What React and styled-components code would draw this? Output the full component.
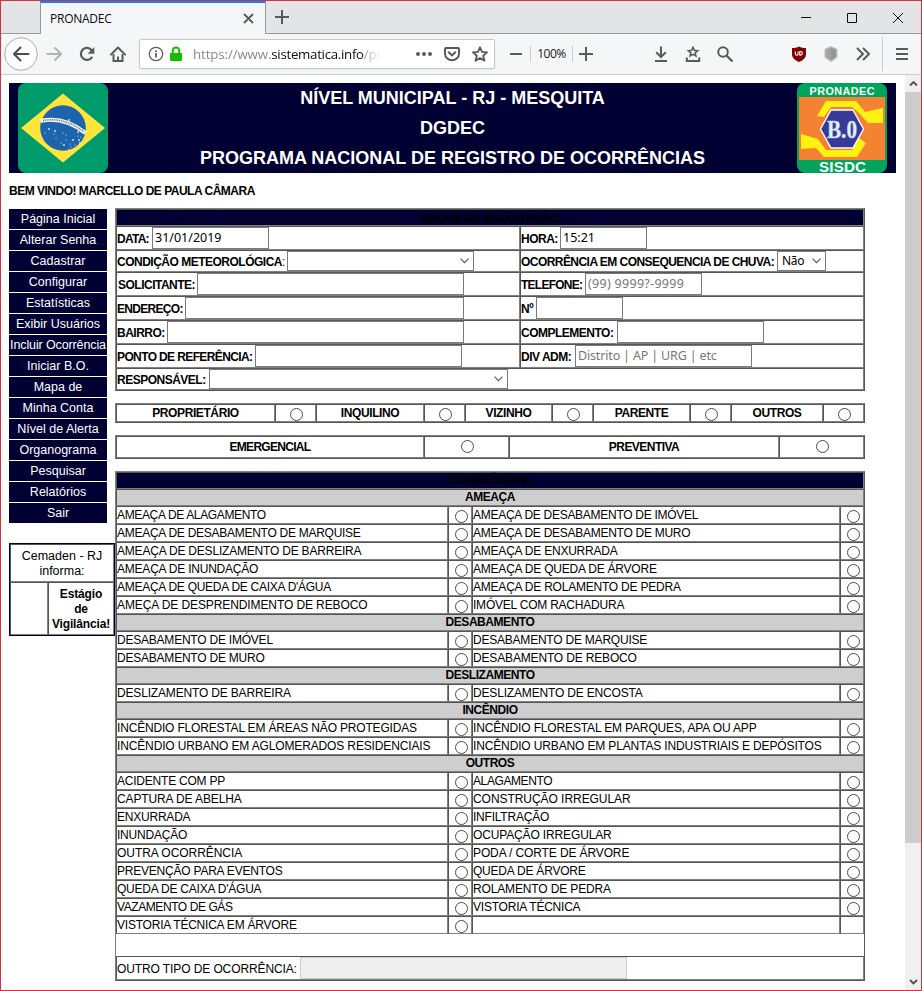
import React from 'react';
import styled, { createGlobalStyle } from 'styled-components';

const NAVY = '#000033';
const LIGHT = '#808080';
const DARK = '#555555';
const ARIAL = '"Liberation Sans", Arial, sans-serif';
const UI = '"Open Sans", "Noto Sans", sans-serif';

const GlobalStyle = createGlobalStyle`
  * { box-sizing: border-box; }
  body { margin: 0; background: #fff; }
  svg { display: block; flex: none; }
`;

/* ---------- browser chrome ---------- */

const Window = styled.div`
  width: 922px;
  height: 991px;
  border: 1px solid #d1343f;
  background: #fff;
  overflow: hidden;
  font-family: ${ARIAL};
  color: #000;
`;

const TabBar = styled.div`
  display: flex;
  height: 33px;
  background: #e3e4e6;
  border-bottom: 1px solid #98989b;
`;

const Tab = styled.div`
  display: flex;
  align-items: center;
  justify-content: space-between;
  width: 226px;
  height: 33px;
  margin-left: 39px;
  padding: 0 11px 0 9px;
  background: #f5f6f7;
  border: 1px solid #98989b;
  border-top: 2px solid #0a84ff;
  border-bottom: 0;
  font: 12px/30px ${UI};
  color: #0c0c0d;
`;

const TabTitle = styled.span`
  letter-spacing: -0.25px;
`;

const NewTab = styled.div`
  display: flex;
  align-items: center;
  justify-content: center;
  width: 32px;
`;

const WindowControls = styled.div`
  display: flex;
  margin-left: auto;
`;

const ControlButton = styled.div`
  display: flex;
  align-items: center;
  justify-content: center;
  width: 46px;
  height: 34px;
`;

const Toolbar = styled.div`
  display: flex;
  align-items: center;
  height: 41px;
  background: #f5f6f7;
  border-bottom: 1px solid #cccccc;
`;

const Slot = styled.div`
  display: flex;
  align-items: center;
  justify-content: center;
  flex: none;
  width: ${(p) => p.$w || 32}px;
  height: 40px;
  margin-left: ${(p) => p.$gap || 0}px;
`;

const Divider = styled.div`
  flex: none;
  width: 1px;
  height: ${(p) => p.$h || 16}px;
  margin-left: ${(p) => p.$gap || 0}px;
  background: #cdcdcf;
`;

const UrlBar = styled.div`
  display: flex;
  align-items: center;
  flex: none;
  width: 356px;
  height: 30px;
  margin-left: 5px;
  background: #fff;
  border: 1px solid #c8c8ca;
  border-radius: 2px;
  box-shadow: 0 1px 3px rgba(0, 0, 0, 0.06);
`;

const UrlText = styled.div`
  width: 192px;
  margin-left: 9px;
  white-space: nowrap;
  font: 13.3px/28px ${UI};
  letter-spacing: -0.12px;
  color: #8a8a8c;
  mask-image: linear-gradient(to right, #000 168px, transparent 188px);
`;

const UrlHost = styled.span`
  color: #0c0c0d;
  letter-spacing: -0.3px;
`;

const ZoomLevel = styled.div`
  width: 41px;
  text-align: center;
  font: 12px/40px ${UI};
  letter-spacing: -0.5px;
  color: #1a1a1c;
`;

const Page = styled.div`
  display: flex;
  height: 915px;
`;

const PageBody = styled.div`
  width: 904px;
  padding: 8px 8px 0 8px;
`;

const Scrollbar = styled.div`
  display: flex;
  flex-direction: column;
  width: 16px;
  background: #f0f0f0;
`;

const ScrollArrow = styled.div`
  display: flex;
  align-items: center;
  justify-content: center;
  height: 17px;
`;

const ScrollThumb = styled.div`
  height: 751px;
  margin-bottom: auto;
  background: #cdcdcd;
`;

/* ---------- page header ---------- */

const Banner = styled.header`
  display: flex;
  justify-content: space-between;
  width: 887px;
  height: 90px;
  padding: 0 9px;
  background: ${NAVY};
`;

const BannerTitle = styled.div`
  color: #fff;
  font: bold 18px/30px ${ARIAL};
  text-align: center;
  white-space: nowrap;
`;

const Welcome = styled.div`
  height: 35px;
  font: bold 12px/36px ${ARIAL};
  letter-spacing: -0.5px;
`;

const Columns = styled.div`
  display: flex;
  align-items: flex-start;
`;

/* ---------- sidebar ---------- */

const Sidebar = styled.nav`
  width: 106px;
  padding-top: 1px;
`;

const MenuItem = styled.div`
  width: 98px;
  height: 20px;
  margin-bottom: 1px;
  background: ${NAVY};
  color: #fff;
  font: 12.5px/20px ${ARIAL};
  letter-spacing: ${(p) => (p.$tight ? -0.12 : 0)}px;
  text-align: center;
  white-space: nowrap;
`;

const Notice = styled.div`
  display: grid;
  grid-template-columns: 38px 66px;
  grid-template-rows: 38px 53px;
  width: 106px;
  margin-top: 20px;
  border: 1px solid ${NAVY};
  font: 12px/15px ${ARIAL};
  text-align: center;
`;

const NoticeCell = styled.div`
  border: 1px solid;
  border-color: ${DARK} ${LIGHT} ${LIGHT} ${DARK};
  grid-column: span ${(p) => p.$span || 1};
  padding-top: 4px;
  font-weight: ${(p) => (p.$span ? 'normal' : 'bold')};
  font-size: ${(p) => (p.$span ? 12.5 : 12)}px;
  letter-spacing: ${(p) => (p.$span ? 0 : -0.15)}px;
`;

/* ---------- form tables ---------- */

const Main = styled.main`
  width: 750px;
`;

const Table = styled.div`
  display: grid;
  grid-template-columns: ${(p) => p.$cols};
  width: 750px;
  margin-bottom: ${(p) => p.$gap || 0}px;
  border: 1px solid;
  border-color: ${LIGHT} ${DARK} ${DARK} ${LIGHT};
`;

const Cell = styled.div`
  display: flex;
  height: ${(p) => p.$h || 18}px;
  border: 1px solid;
  border-color: ${DARK} ${LIGHT} ${LIGHT} ${DARK};
  grid-column: span ${(p) => p.$span || 1};
  white-space: nowrap;
`;

const TitleCell = styled(Cell)`
  justify-content: center;
  height: 17px;
  background: ${(p) => (p.$navy ? NAVY : '#cecece')};
  font: bold 12px/${(p) => p.$lh || 14}px ${ARIAL};
  letter-spacing: ${(p) => p.$ls ?? -0.45}px;
`;

const TextCell = styled(Cell)`
  font: 12px/17px ${ARIAL};
  letter-spacing: ${(p) => p.$ls ?? -0.22}px;
`;

const HeadCell = styled(Cell)`
  justify-content: center;
  font: bold 12px/${(p) => (p.$h ? 20 : 16)}px ${ARIAL};
  letter-spacing: ${(p) => p.$ls ?? -0.4}px;
`;

const RadioCell = styled(Cell)`
  justify-content: center;
  padding: 3px 0 0 2px;
`;

const Radio = styled.span`
  flex: none;
  width: 13px;
  height: 13px;
  border: 1px solid #4a4a4a;
  border-radius: 50%;
  background: #fff;
`;

const Spacer = styled.div`
  grid-column: 1 / -1;
  height: 22px;
`;

const Label = styled.label`
  flex: none;
  width: ${(p) => p.$w}px;
  padding-left: ${(p) => p.$inset || 0}px;
  font: ${(p) => (p.$plain ? 'normal' : 'bold')} 12px/${(p) => p.$lh || 24}px ${ARIAL};
  letter-spacing: ${(p) => p.$ls ?? -0.5}px;
`;

const Plain = styled.span`
  font-weight: normal;
`;

const Field = styled.div`
  display: flex;
  align-items: center;
  justify-content: space-between;
  flex: none;
  width: ${(p) => p.$w}px;
  height: 100%;
  padding: 0 4px 0 2px;
  border: 1px solid ${(p) => (p.$off ? '#cccccc' : '#7a7a7a')};
  background: ${(p) => (p.$off ? '#efefef' : '#fff')};
  color: ${(p) => (p.$hint ? '#777' : '#000')};
  font: 12.5px/20px "Noto Sans", sans-serif;
  letter-spacing: ${(p) => p.$ls || 0}px;
`;

const SelectValue = styled.span`
  padding-left: 2px;
  font-size: 12px;
  letter-spacing: -0.3px;
`;

/* ---------- icons ---------- */

const Icon = ({ s = 16, c = '#5a5a5c', w = 2, children }) => (
  <svg width={s} height={s} viewBox={`0 0 ${s} ${s}`} fill="none" stroke={c} strokeWidth={w}>
    {children}
  </svg>
);

const Chevron = () => (
  <svg width="9" height="6" viewBox="0 0 9 6" fill="none" stroke="#555" strokeWidth="1.1">
    <path d="M0.5 0.7L4.5 4.7L8.5 0.7" />
  </svg>
);

const BackIcon = () => (
  <svg width="34" height="34" viewBox="0 0 34 34" fill="none">
    <circle cx="17" cy="17" r="16.3" fill="#fdfdfd" stroke="#adadaf" />
    <path d="M24.5 17H10.5M16.5 10.5L10 17l6.500 6.500" stroke="#4c4c4f" strokeWidth="2" strokeLinecap="round" strokeLinejoin="round" />
  </svg>
);

const StarPath = 'M8 1.300l2 4.600 5 .5-3.800 3.300 1.200 5-4.400-2.700-4.400 2.700 1.200-5L1 6.400l5-.5z';

const FLAG_STARS = [
  [37, 48], [36, 51], [48, 52], [60, 49], [60, 53], [63, 54], [61, 57], [38, 55], [43, 60], [46, 62], [52, 61],
  [53, 64], [55, 57], [57, 62], [45, 50], [62, 60], [51, 66], [48, 57], [31, 46], [27, 50], [58, 65], [51, 37],
];

const Flag = () => (
  <svg width="90" height="90" viewBox="0 0 90 90">
    <rect width="90" height="90" rx="8" fill="#009b6b" />
    <path d="M3 45L45 10.500L87 45L45 79.500Z" fill="#fee53b" />
    <circle cx="45" cy="45" r="22.800" fill="#1d64ad" />
    <path d="M22.900 37.800Q46 33 67.200 49.800" fill="none" stroke="#fff" strokeWidth="4.200" />
    <path d="M25 37.600Q46 33.600 66 48.900" fill="none" stroke="#6f7f87" strokeWidth="1.700" strokeDasharray="1.100 0.700" />
    {FLAG_STARS.map(([x, y], i) => (
      <circle key={i} cx={x} cy={y} r={i % 3 ? 0.6 : 0.9} fill="#d9e8f5" />
    ))}
  </svg>
);

const Logo = () => (
  <svg width="90" height="90" viewBox="0 0 90 90">
    <rect width="90" height="90" rx="8" fill="#00a45c" />
    <rect x="2" y="14" width="86" height="63" fill="#f58233" />
    <path d="M20 33L29 18H59L68 29L86 25V40H71L61 29L55 24H34L27 34Z" fill="#fff112" />
    <path d="M4 51L21 56L29 67H55L62 55L69 60L60 74H27L19 65L4 66Z" fill="#fff112" />
    <path d="M34 27H56L66.500 46L56 65H34L23.500 46Z" fill="#383a97" stroke="#fff" strokeWidth="1.400" />
    <text x="45" y="11.600" fill="#fff" fontFamily="Liberation Sans, Arial, sans-serif" fontWeight="bold" fontSize="10.8" textAnchor="middle" textLength="65">PRONADEC</text>
    <text x="45" y="55" fill="#e3f2fa" stroke="#a9cbe6" strokeWidth="0.500" fontFamily="Liberation Serif, Times New Roman, serif" fontWeight="bold" fontSize="25" textAnchor="middle" textLength="30" lengthAdjust="spacingAndGlyphs">B.0</text>
    <text x="45.500" y="88.700" fill="#fff" fontFamily="Liberation Sans, Arial, sans-serif" fontWeight="bold" fontSize="15.200" textAnchor="middle" textLength="47">SISDC</text>
  </svg>
);

/* ---------- data ---------- */

const MENU = [
  'Página Inicial', 'Alterar Senha', 'Cadastrar', 'Configurar', 'Estatísticas', 'Exibir Usuários',
  'Incluir Ocorrência', 'Iniciar B.O.', 'Mapa de', 'Minha Conta', 'Nível de Alerta', 'Organograma',
  'Pesquisar', 'Relatórios', 'Sair',
];

const APPLICANTS = ['PROPRIETÁRIO', 'INQUILINO', 'VIZINHO', 'PARENTE', 'OUTROS'];

const GROUPS = [
  ['AMEAÇA', [
    ['AMEAÇA DE ALAGAMENTO', 'AMEAÇA DE DESABAMENTO DE IMÓVEL'],
    ['AMEAÇA DE DESABAMENTO DE MARQUISE', 'AMEAÇA DE DESABAMENTO DE MURO'],
    ['AMEAÇA DE DESLIZAMENTO DE BARREIRA', 'AMEAÇA DE ENXURRADA'],
    ['AMEAÇA DE INUNDAÇÃO', 'AMEAÇA DE QUEDA DE ÁRVORE'],
    ["AMEAÇA DE QUEDA DE CAIXA D'ÁGUA", 'AMEAÇA DE ROLAMENTO DE PEDRA'],
    ['AMEÇA DE DESPRENDIMENTO DE REBOCO', 'IMÓVEL COM RACHADURA'],
  ]],
  ['DESABAMENTO', [
    ['DESABAMENTO DE IMÓVEL', 'DESABAMENTO DE MARQUISE'],
    ['DESABAMENTO DE MURO', 'DESABAMENTO DE REBOCO'],
  ]],
  ['DESLIZAMENTO', [
    ['DESLIZAMENTO DE BARREIRA', 'DESLIZAMENTO DE ENCOSTA'],
  ]],
  ['INCÊNDIO', [
    ['INCÊNDIO FLORESTAL EM ÁREAS NÃO PROTEGIDAS', 'INCÊNDIO FLORESTAL EM PARQUES, APA OU APP'],
    ['INCÊNDIO URBANO EM AGLOMERADOS RESIDENCIAIS', 'INCÊNDIO URBANO EM PLANTAS INDUSTRIAIS E DEPÓSITOS'],
  ]],
  ['OUTROS', [
    ['ACIDENTE COM PP', 'ALAGAMENTO'],
    ['CAPTURA DE ABELHA', 'CONSTRUÇÃO IRREGULAR'],
    ['ENXURRADA', 'INFILTRAÇÃO'],
    ['INUNDAÇÃO', 'OCUPAÇÃO IRREGULAR'],
    ['OUTRA OCORRÊNCIA', 'PODA / CORTE DE ÁRVORE'],
    ['PREVENÇÃO PARA EVENTOS', 'QUEDA DE ÁRVORE'],
    ["QUEDA DE CAIXA D'ÁGUA", 'ROLAMENTO DE PEDRA'],
    ['VAZAMENTO DE GÁS', 'VISTORIA TÉCNICA'],
    ['VISTORIA TÉCNICA EM ÁRVORE', ''],
  ]],
];

// Letter spacing for entries that differ from the default.
const TRACKING = {
  'AMEAÇA DE ALAGAMENTO': -0.35,
  'AMEAÇA DE DESABAMENTO DE IMÓVEL': -0.28,
  'AMEAÇA DE DESABAMENTO DE MARQUISE': -0.27,
  'AMEAÇA DE DESABAMENTO DE MURO': -0.27,
  'AMEAÇA DE DESLIZAMENTO DE BARREIRA': -0.2,
  "AMEAÇA DE QUEDA DE CAIXA D'ÁGUA": -0.27,
  'AMEÇA DE DESPRENDIMENTO DE REBOCO': -0.1,
  'DESABAMENTO DE REBOCO': -0.16,
  'DESLIZAMENTO DE BARREIRA': -0.17,
  'DESLIZAMENTO DE ENCOSTA': -0.17,
  'INCÊNDIO FLORESTAL EM ÁREAS NÃO PROTEGIDAS': -0.18,
  'INCÊNDIO FLORESTAL EM PARQUES, APA OU APP': -0.15,
  'INCÊNDIO URBANO EM AGLOMERADOS RESIDENCIAIS': -0.14,
  'INCÊNDIO URBANO EM PLANTAS INDUSTRIAIS E DEPÓSITOS': -0.14,
  ALAGAMENTO: -0.4,
  'CAPTURA DE ABELHA': -0.12,
  'CONSTRUÇÃO IRREGULAR': -0.05,
  'OCUPAÇÃO IRREGULAR': -0.14,
  'OUTRA OCORRÊNCIA': -0.05,
  'PODA / CORTE DE ÁRVORE': -0.12,
  'ROLAMENTO DE PEDRA': -0.14,
  'VAZAMENTO DE GÁS': -0.42,
};

/* ---------- sections ---------- */

const BrowserTabs = () => (
  <TabBar>
    <Tab>
      <TabTitle>PRONADEC</TabTitle>
      <Icon s={11} w={1.8}><path d="M1 1l9 9M10 1L1 10" /></Icon>
    </Tab>
    <NewTab>
      <Icon s={14}><path d="M7 0v14M0 7h14" /></Icon>
    </NewTab>
    <WindowControls>
      <ControlButton><Icon s={10} w={1} c="#111"><path d="M0 4.500h10" /></Icon></ControlButton>
      <ControlButton><Icon s={10} w={1} c="#111"><path d="M0.500 0.500h9v9h-9z" /></Icon></ControlButton>
      <ControlButton><Icon s={10} w={1} c="#111"><path d="M0 0l10 10M10 0L0 10" /></Icon></ControlButton>
    </WindowControls>
  </TabBar>
);

const BrowserToolbar = () => (
  <Toolbar>
    <Slot $w={34} $gap={3}><BackIcon /></Slot>
    <Slot><Icon c="#b3b3b5"><path d="M0.500 8H14.500M8.500 1.500L15 8l-6.500 6.500" strokeLinejoin="round" /></Icon></Slot>
    <Slot $w={31} $gap={1}>
      <Icon><path d="M13.200 10.700A6 6 0 1 1 12.800 4.500" strokeWidth="2.200" /><path d="M15.300 1v6.700H8.600z" fill="#5a5a5c" stroke="none" /></Icon>
    </Slot>
    <Slot>
      <Icon>
        <path d="M0.900 8.600L8 1.500l7.100 7.100" strokeLinecap="round" strokeLinejoin="round" />
        <path d="M3.500 8V15H12.500V8" />
        <path d="M7 10.500h2V15H7z" fill="#5a5a5c" stroke="none" />
      </Icon>
    </Slot>
    <UrlBar>
      <Slot $w={16} $gap={8}>
        <Icon w={1.2}><circle cx="8" cy="8" r="6.700" /><path d="M8 7v4.500M8 4.200v1.700" strokeWidth="1.700" /></Icon>
      </Slot>
      <Slot $w={16} $gap={4}>
        <Icon c="#12bc00"><path d="M4.700 8V4.800a3.300 3.300 0 0 1 6.600 0V8" /><rect x="2" y="7" width="12" height="8" rx="1" fill="#12bc00" stroke="none" /></Icon>
      </Slot>
      <UrlText>https://www.<UrlHost>sistematica.info</UrlHost>/pr</UrlText>
      <Slot $w={28} $gap={25}>
        <Icon><g fill="#5a5a5c" stroke="none"><circle cx="2" cy="8" r="2" /><circle cx="8" cy="8" r="2" /><circle cx="14" cy="8" r="2" /></g></Icon>
      </Slot>
      <Slot $w={28}>
        <Icon><path d="M2 2h12a1 1 0 0 1 1 1v4.500a7 6.800 0 0 1-14 0V3a1 1 0 0 1 1-1z" /><path d="M4.700 6.200L8 9.400l3.300-3.200" strokeLinecap="round" /></Icon>
      </Slot>
      <Slot $w={28}><Icon w={1.9}><path d={StarPath} strokeLinejoin="round" /></Icon></Slot>
    </UrlBar>
    <Slot $w={28} $gap={7}><Icon s={12}><path d="M0 6h12" /></Icon></Slot>
    <Divider />
    <ZoomLevel>100%</ZoomLevel>
    <Divider />
    <Slot $w={26}><Icon s={14}><path d="M7 0v14M0 7h14" /></Icon></Slot>
    <Slot $gap={46}>
      <Icon><path d="M8 0.500v10M3.200 6.300L8 11l4.800-4.700M2 15h12" /></Icon>
    </Slot>
    <Slot>
      <Icon w={1.6}>
        <path d="M8 1.300l1.400 3 3.200.4-2.400 2.100.7 3.200L8 8.400 5.100 10l.7-3.200-2.400-2.100 3.200-.4z" />
        <path d="M1.800 11.500V15h12.400v-3.500" strokeWidth="2" />
      </Icon>
    </Slot>
    <Slot><Icon><circle cx="6" cy="6" r="4.800" /><path d="M9.600 9.600L15.500 15.500" strokeWidth="2.200" /></Icon></Slot>
    <Slot $gap={42}>
      <Icon>
        <path d="M8 0.500C10 1.800 12.500 2 15 2V8.500C15 12 11.500 14.500 8 16C4.500 14.500 1 12 1 8.500V2C3.500 2 6 1.800 8 0.500z" fill="#800000" stroke="none" />
        <path d="M4.300 5.500v2.300a1.400 1.400 0 0 0 2.800 0V5.500M8.800 5.500h.7a1.800 1.800 0 0 1 0 3.700h-.7z" stroke="#fff" strokeWidth="1.100" />
      </Icon>
    </Slot>
    <Slot>
      <Icon><path d="M8 0L14.500 3V11.500L8 16L1.500 11.500V3z" fill="#b9b9b9" stroke="none" /><path d="M8 1.500L13 4V10.700L8 14.300z" fill="#949494" stroke="none" /><path d="M8 1.500V14.300L3 10.700V4z" fill="#a3a3a3" stroke="none" /></Icon>
    </Slot>
    <Slot><Icon><path d="M2 2l6 6-6 6M8 2l6 6-6 6" /></Icon></Slot>
    <Divider $h={34} $gap={3} />
    <Slot $w={38}><Icon><path d="M2 3h12M2 8h12M2 13h12" /></Icon></Slot>
  </Toolbar>
);

const RequestTable = () => (
  <Table $cols="404px 344px" $gap={12}>
    <TitleCell $navy $span={2} $ls={-0.55} $lh={16}>DADOS DA SOLICITAÇÃO</TitleCell>
    <Cell $h={24}><Label $w={35} $ls={-0.75}>DATA:</Label><Field $w={117}>31/01/2019</Field></Cell>
    <Cell $h={24}><Label $w={39}>HORA:</Label><Field $w={87}>15:21</Field></Cell>
    <Cell $h={22}><Label $w={170} $lh={22}>CONDIÇÃO METEOROLÓGICA<Plain>:</Plain></Label><Field $w={187}><i /><Chevron /></Field></Cell>
    <Cell $h={22}><Label $w={256} $lh={22} $ls={-0.55}>OCORRÊNCIA EM CONSEQUENCIA DE CHUVA:</Label><Field $w={49}><SelectValue>Não</SelectValue><Chevron /></Field></Cell>
    <Cell $h={24}><Label $w={80} $inset={1}>SOLICITANTE:</Label><Field $w={267} /></Cell>
    <Cell $h={24}><Label $w={64} $ls={-0.75}>TELEFONE:</Label><Field $w={117} $hint $ls={0.3}>(99) 9999?-9999</Field></Cell>
    <Cell $h={24}><Label $w={68} $ls={-0.7}>ENDEREÇO:</Label><Field $w={279} /></Cell>
    <Cell $h={24}><Label $w={15}>Nº</Label><Field $w={87} /></Cell>
    <Cell $h={24}><Label $w={50}>BAIRRO:</Label><Field $w={297} /></Cell>
    <Cell $h={24}><Label $w={96}>COMPLEMENTO:</Label><Field $w={147} /></Cell>
    <Cell $h={24}><Label $w={138} $ls={-0.62}>PONTO DE REFERÊNCIA:</Label><Field $w={207} /></Cell>
    <Cell $h={24}><Label $w={54}>DIV ADM:</Label><Field $w={177} $hint $ls={-0.16}>Distrito | AP | URG | etc</Field></Cell>
    <Cell $h={22} $span={2}><Label $w={92} $lh={22}>RESPONSÁVEL:</Label><Field $w={299}><i /><Chevron /></Field></Cell>
  </Table>
);

const OccurrenceTable = () => (
  <Table $cols="332px 24px 368px 24px">
    <TitleCell $navy $span={4} $ls={-0.6}>OCORRÊNCIAS</TitleCell>
    {GROUPS.map(([title, rows]) => (
      <React.Fragment key={title}>
        <TitleCell $span={4}>{title}</TitleCell>
        {rows.map(([left, right]) => (
          <React.Fragment key={left}>
            <TextCell $ls={TRACKING[left]}>{left}</TextCell>
            <RadioCell><Radio /></RadioCell>
            <TextCell $ls={TRACKING[right]}>{right}</TextCell>
            <RadioCell>{right && <Radio />}</RadioCell>
          </React.Fragment>
        ))}
      </React.Fragment>
    ))}
    <Spacer />
    <Cell $h={24} $span={4}>
      <Label $w={183} $plain $ls={-0.1}>OUTRO TIPO DE OCORRÊNCIA:</Label>
      <Field $w={327} $off />
    </Cell>
  </Table>
);

export default function App() {
  return (
    <Window>
      <GlobalStyle />
      <BrowserTabs />
      <BrowserToolbar />
      <Page>
        <PageBody>
          <Banner>
            <Flag />
            <BannerTitle>
              <div>NÍVEL MUNICIPAL - RJ - MESQUITA</div>
              <div>DGDEC</div>
              <div>PROGRAMA NACIONAL DE REGISTRO DE OCORRÊNCIAS</div>
            </BannerTitle>
            <Logo />
          </Banner>
          <Welcome>BEM VINDO! MARCELLO DE PAULA CÂMARA</Welcome>
          <Columns>
            <Sidebar>
              {MENU.map((item) => <MenuItem key={item} $tight={item.length > 16}>{item}</MenuItem>)}
              <Notice>
                <NoticeCell $span={2}>Cemaden - RJ<br />informa:</NoticeCell>
                <NoticeCell />
                <NoticeCell>Estágio<br />de<br />Vigilância!</NoticeCell>
              </Notice>
            </Sidebar>
            <Main>
              <RequestTable />
              <Table $cols="159px 41px 108px 41px 87px 41px 97px 41px 92px 41px" $gap={12}>
                {APPLICANTS.map((name) => (
                  <React.Fragment key={name}>
                    <HeadCell>{name}</HeadCell>
                    <RadioCell><Radio /></RadioCell>
                  </React.Fragment>
                ))}
              </Table>
              <Table $cols="308px 85px 270px 85px" $gap={12}>
                <HeadCell $h={22} $ls={-0.7}>EMERGENCIAL</HeadCell>
                <RadioCell $h={22}><Radio /></RadioCell>
                <HeadCell $h={22} $ls={-0.55}>PREVENTIVA</HeadCell>
                <RadioCell $h={22}><Radio /></RadioCell>
              </Table>
              <OccurrenceTable />
            </Main>
          </Columns>
        </PageBody>
        <Scrollbar>
          <ScrollArrow>
            <Icon s={9} w={1.8} c="#505050"><path d="M1 6.500L4.500 3L8 6.500" /></Icon>
          </ScrollArrow>
          <ScrollThumb />
          <ScrollArrow>
            <Icon s={9} w={1.8} c="#505050"><path d="M1 3L4.500 6.500L8 3" /></Icon>
          </ScrollArrow>
        </Scrollbar>
      </Page>
    </Window>
  );
}
